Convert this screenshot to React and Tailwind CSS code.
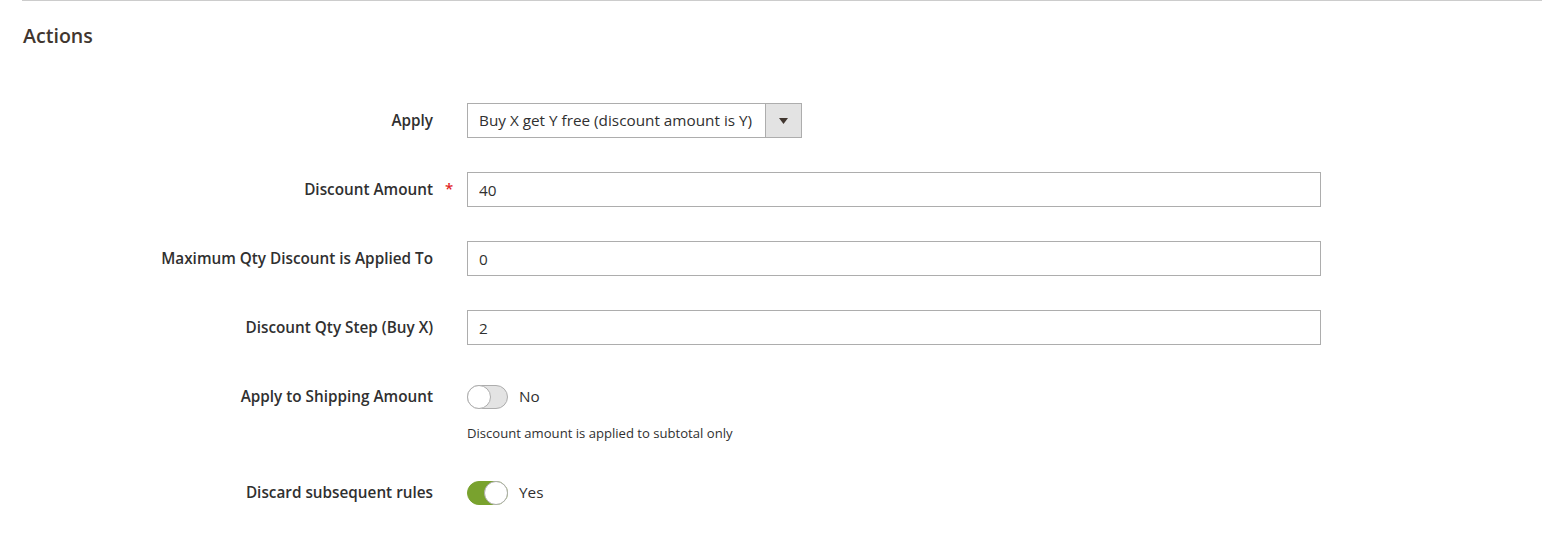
import { useState } from 'react';

function Toggle({ on, label }) {
  return (
    <div className="flex items-center">
      <span
        className={
          on
            ? 'relative w-[41px] h-[24px] rounded-full bg-[#79a22e] border border-[#79a22e]'
            : 'relative w-[41px] h-[24px] rounded-full bg-[#e3e3e3] border border-[#adadad]'
        }
      >
        <span
          className={
            on
              ? 'absolute top-[-1px] right-[-1px] w-[24px] h-[24px] rounded-full bg-white border border-[#adadad]'
              : 'absolute top-[-1px] left-[-1px] w-[24px] h-[24px] rounded-full bg-white border border-[#adadad]'
          }
        />
      </span>
      <span className="ml-[11px] text-[15.3px]">{label}</span>
    </div>
  );
}

function Row({ label, required, children, className }) {
  return (
    <div className={'flex items-center ' + (className || '')}>
      <div className="w-[411px] text-right text-[15.3px] font-semibold relative">
        {label}
        {required && (
          <span className="absolute left-full ml-[12px] top-[-1px] text-[#e22626] text-[15px]">*</span>
        )}
      </div>
      <div className="ml-[34px]">{children}</div>
    </div>
  );
}

function TextInput({ value }) {
  const [v, setV] = useState(value);
  return (
    <input
      value={v}
      onChange={(e) => setV(e.target.value)}
      className="w-[854px] h-[35px] border border-[#adadad] px-[11px] text-[15.3px] text-[#303030] outline-none"
    />
  );
}

export default function App() {
  return (
    <div className="bg-white min-h-screen font-['Open_Sans',sans-serif] text-[#303030] pl-[22px]">
      <div className="border-t border-[#cccccc] pt-[21px]">
        <h2 className="ml-[1px] text-[19.6px] leading-[28px] font-semibold text-[#41362f]">Actions</h2>
      </div>

      <div className="mt-[53px]">
        <Row label="Apply" className="h-[35px]">
          <div className="flex w-[335px] h-[35px] border border-[#adadad]">
            <div className="flex-1 flex items-center pl-[11px] text-[15.3px] whitespace-nowrap">
              Buy X get Y free (discount amount is Y)
            </div>
            <div className="w-[36px] shrink-0 bg-[#e3e3e3] border-l border-[#adadad] flex items-center justify-center">
              <svg width="9" height="6" viewBox="0 0 9 6">
                <path d="M0 0 L9 0 L4.5 6 Z" fill="#41362f" />
              </svg>
            </div>
          </div>
        </Row>

        <Row label="Discount Amount" required className="h-[35px] mt-[34px]">
          <TextInput value="40" />
        </Row>

        <Row label="Maximum Qty Discount is Applied To" className="h-[35px] mt-[34px]">
          <TextInput value="0" />
        </Row>

        <Row label="Discount Qty Step (Buy X)" className="h-[35px] mt-[34px]">
          <TextInput value="2" />
        </Row>

        <Row label="Apply to Shipping Amount" className="h-[35px] mt-[34px]">
          <Toggle on={false} label="No" />
        </Row>
        <div className="ml-[445px] mt-[10px] text-[13.1px] leading-[18px]">
          Discount amount is applied to subtotal only
        </div>

        <Row label="Discard subsequent rules" className="h-[35px] mt-[33px]">
          <Toggle on label="Yes" />
        </Row>
      </div>
    </div>
  );
}
